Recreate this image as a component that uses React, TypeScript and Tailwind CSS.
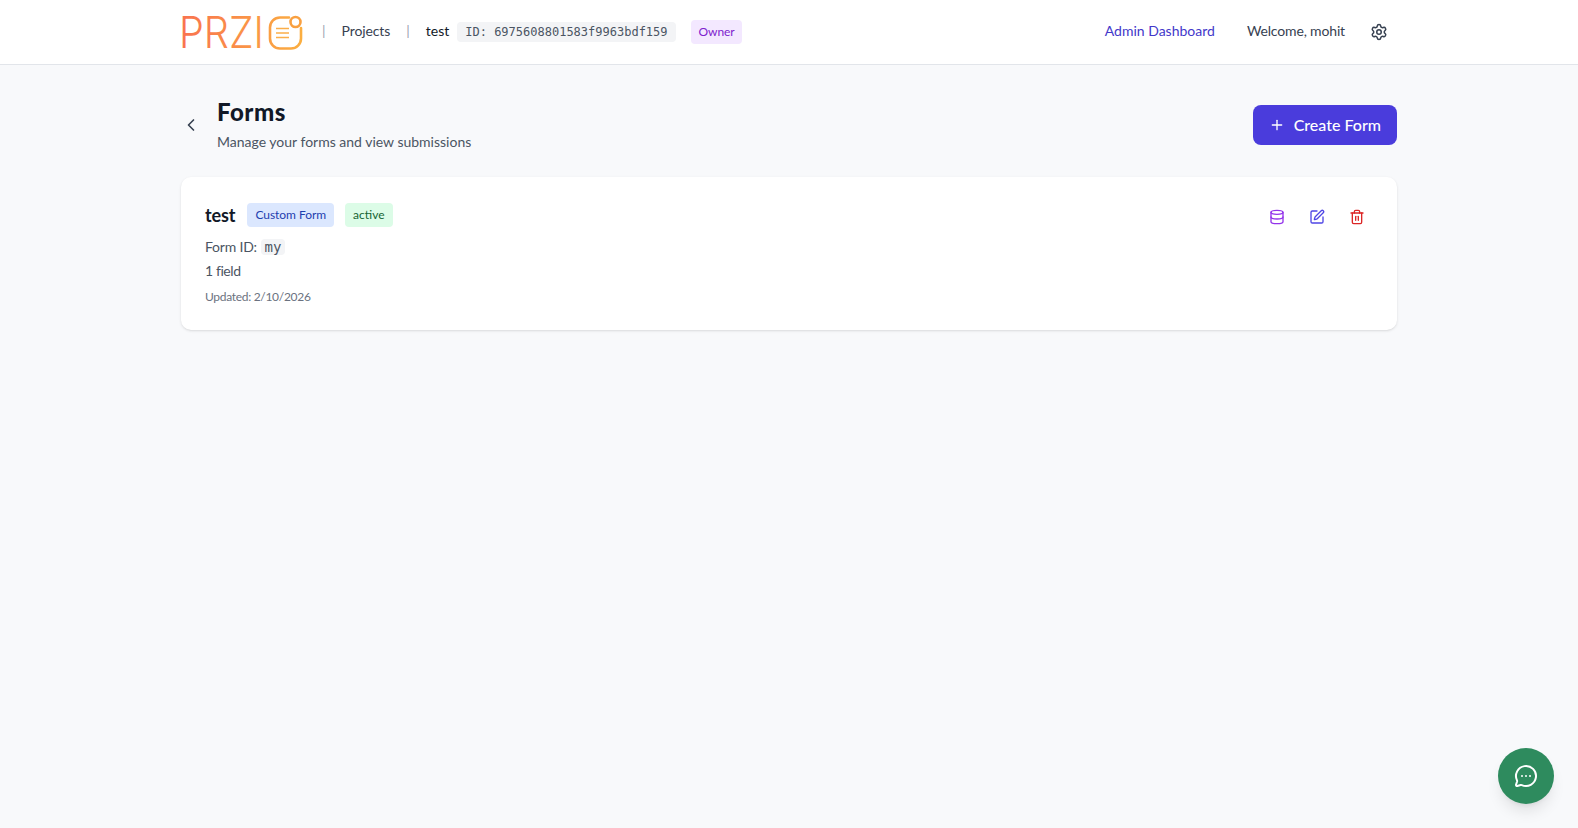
import { ChevronLeft, Database, MessageCircleMore, Plus, Settings, SquarePen, Trash2 } from "lucide-react";

const sans = "font-['Lato','Noto_Sans',sans-serif]";
const mono = "font-['DejaVu_Sans_Mono','Liberation_Mono',monospace]";

function Logo() {
  return (
    <svg width="124" height="40" viewBox="0 0 124 40" className="block overflow-visible">
      <defs>
        <linearGradient id="lg" gradientUnits="userSpaceOnUse" x1="0" y1="0" x2="124" y2="0">
          <stop offset="0" stopColor="#f9734f" />
          <stop offset="1" stopColor="#fbb040" />
        </linearGradient>
      </defs>
      <text x="-2" y="36" fill="url(#lg)" fontFamily="Inter, sans-serif" fontWeight="350" fontSize="44" textLength="85" lengthAdjust="spacingAndGlyphs">PRZI</text>
      <path d="M108 5.5H99a10 10 0 0 0-10 10v11a10 10 0 0 0 10 10h11a10 10 0 0 0 10-10V16" fill="none" stroke="url(#lg)" strokeWidth="2.6" strokeLinecap="round" />
      <circle cx="114.5" cy="10" r="5" fill="#fff" stroke="#f9a040" strokeWidth="2.6" />
      <path d="M95 16.5h13M95 21h13M95 25.5h13" stroke="#fbae4a" strokeWidth="1.6" />
    </svg>
  );
}

export default function App() {
  return (
    <div className={`min-h-[828px] bg-[#f8f9fb] ${sans}`}>
      <header className="h-[65px] border-b border-[#e2e5ea] bg-white">
        <div className="mx-auto flex h-full max-w-7xl items-center justify-between px-8">
          <div className="flex items-center">
            <Logo />
            <span className="mb-0.5 ml-[17px] text-sm text-[#9ca3af]">|</span>
            <span className="mb-0.5 ml-4 text-sm tracking-[-0.1px] text-[#374151]">Projects</span>
            <span className="mb-0.5 ml-4 text-sm text-[#9ca3af]">|</span>
            <span className="mb-0.5 ml-4 text-sm text-[#111827]">test</span>
            <span className={`ml-2 rounded bg-[#f3f4f6] px-2 py-0.5 text-xs text-[#4b5563] ${mono}`}>ID: 6975608801583f9963bdf159</span>
            <span className="ml-[15px] rounded bg-[#f3e8ff] px-2 py-1 text-xs tracking-[-0.1px] text-[#7e22ce]">Owner</span>
          </div>
          <div className="flex items-center">
            <span className="mb-0.5 text-sm text-[#4338ca]">Admin Dashboard</span>
            <span className="mb-0.5 ml-8 text-sm tracking-[-0.15px] text-[#374151]">Welcome, mohit</span>
            <Settings className="ml-[25px] mr-[9px] size-[18px] text-[#374151]" strokeWidth={2} />
          </div>
        </div>
      </header>
      <main className="mx-auto max-w-7xl px-8 pt-8">
        <div className="flex h-14 items-center justify-between">
          <div className="flex items-center">
            <ChevronLeft className="size-5 text-[#374151]" />
            <div className="mb-0.5 ml-4">
              <h1 className="text-2xl font-black leading-8 tracking-[0.5px] text-[#111827]">Forms</h1>
              <p className="mt-1 text-sm text-[#4b5563]">Manage your forms and view submissions</p>
            </div>
          </div>
          <button className="flex h-10 items-center rounded-lg bg-[#4a3cdc] px-4 font-medium text-white">
            <Plus className="mr-[9px] size-4" strokeWidth={2} />
            Create Form
          </button>
        </div>
        <section className="mt-6 flex h-[153px] justify-between rounded-[10px] bg-white p-6 shadow">
          <div>
            <div className="flex items-center">
              <h3 className="text-lg font-bold tracking-[-0.1px] text-[#111827]">test</h3>
              <span className="ml-3 rounded bg-[#dbe7fe] px-2 py-1 text-xs tracking-[-0.05px] text-[#1e40af]">Custom Form</span>
              <span className="ml-[11px] rounded bg-[#dcfce7] px-2 py-1 text-xs text-[#166534]">active</span>
            </div>
            <div className="mt-2 text-sm text-[#4b5563]">
              <span className="tracking-[-0.2px]">Form ID:</span> <code className={`rounded bg-[#f3f4f6] px-1 text-[#4b5563] ${mono}`}>my</code>
            </div>
            <div className="mt-1 text-sm tracking-[-0.4px] text-[#4b5563]">1 field</div>
            <div className="mt-2 text-xs tracking-[-0.3px] text-[#6b7280]">Updated: 2/10/2026</div>
          </div>
          <div className="flex items-start gap-6 pr-2 pt-2">
            <Database className="size-4 text-[#9333ea]" />
            <SquarePen className="size-4 text-[#4f46e5]" />
            <Trash2 className="size-4 text-[#dc2626]" />
          </div>
        </section>
      </main>
      <button className="fixed bottom-6 right-6 flex size-14 items-center justify-center rounded-full bg-[#2e8b5e] text-white shadow-lg">
        <MessageCircleMore className="size-6" />
      </button>
    </div>
  );
}
